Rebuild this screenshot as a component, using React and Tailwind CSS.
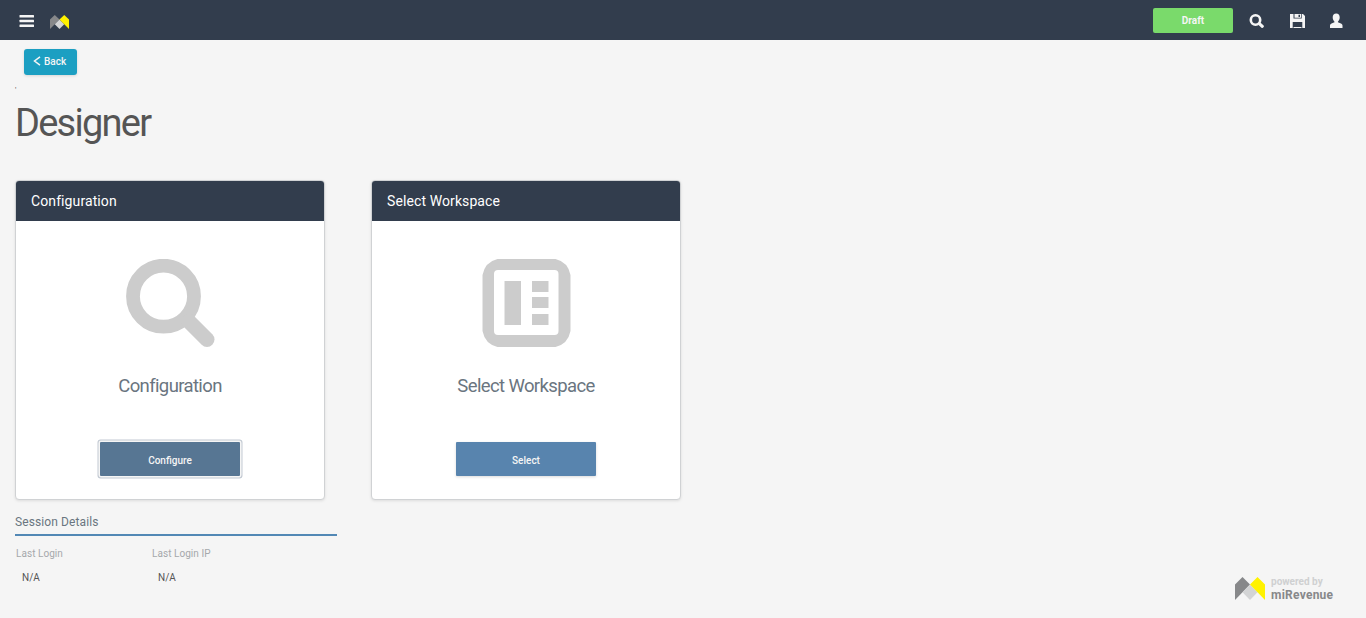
import React from 'react';

function Logo({ className }) {
  return (
    <svg viewBox="0 0 30 23" preserveAspectRatio="none" className={className}>
      <path d="M0 7.5 7.5 0 15 7.5 0 23Z" fill="#87888a" />
      <path d="M15 7.5 22.5 15.2 15 23 7.5 15.2Z" fill="#d3d4d5" />
      <path d="M15 7.5 22.5 0 30 7.5V23Z" fill="#fff200" />
    </svg>
  );
}

function TopBar() {
  return (
    <header className="flex h-10 items-start bg-[#323d4d]">
      <svg viewBox="0 0 15 12" className="ml-[19px] mt-[15px] h-3 w-[15px]" fill="#f5f5f5">
        <rect x=".5" width="14.5" height="2.6" rx=".5" />
        <rect x=".5" y="4.7" width="14.5" height="2.6" rx=".5" />
        <rect x=".5" y="9.4" width="14.5" height="2.6" rx=".5" />
      </svg>
      <Logo className="ml-4 mt-[15px] h-[14px] w-[19px]" />
      <div className="ml-auto mt-2 flex h-[25px] w-20 items-center justify-center rounded-[2px] bg-[#7ada6b] text-[10px] font-bold text-[#f5f5f5]">
        Draft
      </div>
      <svg viewBox="0 0 15 14" className="ml-4 mt-[14px] h-[14px] w-[15px]" fill="none" stroke="#f5f5f5">
        <circle cx="6.500" cy="6" r="4.700" strokeWidth="2.600" />
        <path d="m10.600 9.800 2.700 2.500" strokeWidth="3.100" strokeLinecap="round" />
      </svg>
      <svg viewBox="0 0 15 14" className="ml-[26px] mt-[14px] h-[14px] w-[15px]" fill="#f5f5f5" fillRule="evenodd">
        <path d="M0 0H3.500V4.600H11.700V0H13L15 2V14H12.300V8H2.700V14H0ZM4.500 0H11V3.800H4.500ZM8.500.8V3H10V.8ZM3.500 12.900H11.500V14H3.500Z" />
      </svg>
      <svg viewBox="0 0 13 15" className="ml-[25px] mr-[23px] mt-[13px] h-[15px] w-[13px]" fill="#f5f5f5">
        <path d="M6.200.5C4 .5 2.700 2 2.700 4.300c0 2 .7 3.500 1.800 4.400v.6L1.500 10.500C.4 11 0 11.700 0 12.800V15h12.500v-2.200c0-1.100-.4-1.800-1.500-2.300L7.900 9.300v-.6C9 7.800 9.700 6.300 9.700 4.300 9.700 2 8.400.5 6.200.5Z" />
      </svg>
    </header>
  );
}

function SearchIcon() {
  return (
    <svg viewBox="0 0 90 88" className="h-[88px] w-[90px]" fill="none" stroke="#cccccc">
      <circle cx="38.500" cy="37.200" r="30.500" strokeWidth="13.800" />
      <path d="M64 62.500 82 80.500" strokeWidth="15" strokeLinecap="round" />
    </svg>
  );
}

function WorkspaceIcon() {
  return (
    <svg viewBox="0 0 90 88" className="h-[88px] w-[90px]" fill="#cccccc" fillRule="evenodd">
      <path d="M16.500 0H74.500Q87 3 89.500 16V72Q87 85 74.500 88H16.500Q4 85 1.500 72V16Q4 3 16.500 0ZM17 11Q13 11 13 15V72Q13 76 17 76H73.500Q77.500 76 77.500 72V15Q77.500 11 73.500 11Z" />
      <path d="M23.500 22H40V66H23.500ZM51 22H67.500V33H51ZM51 38H67.500V49H51ZM51 55H67.500V66H51Z" />
    </svg>
  );
}

function Card({ title, icon, action, focused }) {
  return (
    <section className="flex h-80 w-[310px] flex-col overflow-hidden rounded border border-[#d0d2d4] bg-white shadow-[0_1px_3px_rgba(0,0,0,0.1)]">
      <h2 className="h-10 shrink-0 bg-[#323d4d] pl-[15px] text-[14px] font-normal leading-10 tracking-[0.1px] text-white">
        {title}
      </h2>
      <div className="flex flex-col items-center pt-[38px]">
        {icon}
        <p className="mt-[26px] h-[26px] text-[18.5px] leading-[26px] tracking-[-0.62px] text-[#6a7580]">{title}</p>
        <button
          className={
            focused
              ? 'mt-[43px] h-[34px] w-[140px] rounded-[1px] bg-[#577693] pt-[2px] text-[10px] font-medium text-[#f5f5f5] shadow-[0_0_0_1.5px_#f5f5f5,0_0_0_2.5px_#c3cad3]'
              : 'mt-[43px] h-[34px] w-[140px] rounded-[1px] bg-[#5884ae] pt-[2px] text-[10px] font-medium text-[#f5f5f5] shadow-[0_1px_3px_rgba(0,0,0,0.15)]'
          }
        >
          {action}
        </button>
      </div>
    </section>
  );
}

function Detail({ label, value }) {
  return (
    <div className="w-[136px] pl-px">
      <dt className="h-6 text-[10px] leading-6 tracking-[0.05px] text-[#a5a8ab]">{label}</dt>
      <dd className="h-6 pl-[6px] text-[10px] leading-6 text-[#555555]">{value}</dd>
    </div>
  );
}

export default function App() {
  return (
    <div className="flex h-[618px] flex-col overflow-hidden bg-[#f5f5f5] font-['Roboto',sans-serif]">
      <TopBar />
      <button className="ml-6 mt-[9px] flex h-[26px] w-[53px] shrink-0 items-center rounded-[3px] bg-[#1c9fc2] pb-px pl-[9px] text-[10px] font-medium text-[#f5f5f5] shadow-[0_1px_3px_rgba(0,0,0,0.12)]">
        <svg viewBox="0 0 8 10" className="mb-px mr-[3px] h-[10px] w-2" fill="none" stroke="#f5f5f5" strokeWidth="1.5">
          <path d="M7 .8 1.5 5 7 9.2" />
        </svg>
        Back
      </button>
      <div className="ml-[15px] mt-[7px] h-[19px] text-[8px] leading-4 text-[#555555]">'</div>
      <h1 className="ml-[15px] h-[44px] text-[38px] font-normal leading-[44px] tracking-[-1.75px] text-[#555555]">Designer</h1>
      <main className="ml-[15px] mt-[35px] flex gap-[46px]">
        <Card title="Configuration" icon={<SearchIcon />} action="Configure" focused />
        <Card title="Select Workspace" icon={<WorkspaceIcon />} action="Select" />
      </main>
      <div className="flex items-start justify-between pl-[15px] pr-8">
        <section className="w-[322px] pt-[9px]">
          <h3 className="h-[27px] border-b-2 border-[#5288b5] pt-px text-[12px] leading-[25px] tracking-[0.1px] text-[#6a7580]">Session Details</h3>
          <dl className="mt-[6px] flex">
            <Detail label="Last Login" value="N/A" />
            <Detail label="Last Login IP" value="N/A" />
          </dl>
        </section>
        <footer className="mt-[75px] flex h-7 w-[99px] items-start">
          <Logo className="mt-[2px] h-[23px] w-[30px] shrink-0" />
          <div className="ml-[6px] whitespace-nowrap">
            <div className="h-[13px] text-[10px] font-bold leading-[13px] text-[#cfd0d1]">powered by</div>
            <div className="h-[14px] text-[12px] font-bold leading-[14px] tracking-[0.25px] text-[#87888a]">miRevenue</div>
          </div>
        </footer>
      </div>
    </div>
  );
}
